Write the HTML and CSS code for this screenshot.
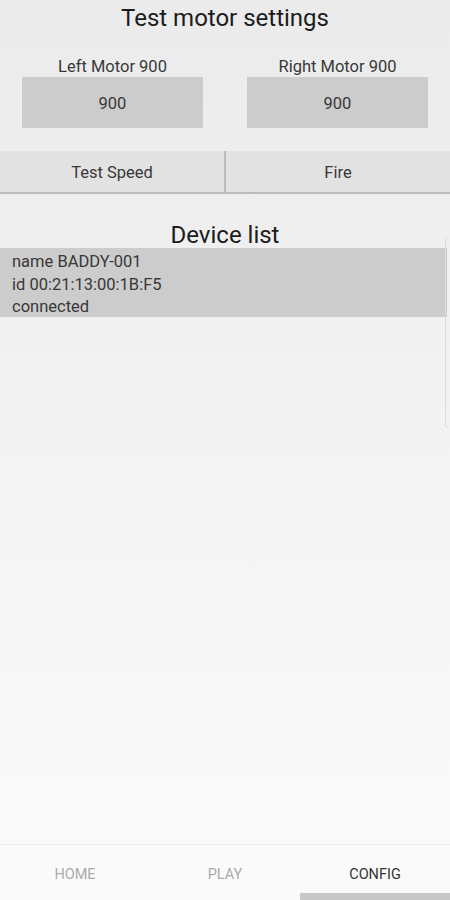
FILE: index.html
```html
<!DOCTYPE html>
<html>
  <head>
    <title>Config</title>
    <link rel="stylesheet" href="styles.css">
  </head>
  <body>
    <div class="screen">
      <main class="content">
        <h2 class="section-title">Test motor settings</h2>

        <div class="motors">
          <div class="motor">
            <div class="motor-label">Left Motor 900</div>
            <div class="motor-input">900</div>
          </div>
          <div class="motor">
            <div class="motor-label">Right Motor 900</div>
            <div class="motor-input">900</div>
          </div>
        </div>

        <div class="actions">
          <button class="action-button">Test Speed</button>
          <button class="action-button">Fire</button>
        </div>

        <h2 class="section-title device-title">Device list</h2>
        <div class="device">
          <div>name BADDY-001</div>
          <div>id 00:21:13:00:1B:F5</div>
          <div>connected</div>
        </div>
      </main>

      <nav class="tabs">
        <div class="tab">HOME</div>
        <div class="tab">PLAY</div>
        <div class="tab active">CONFIG</div>
      </nav>

      <div class="edge-handle"></div>
    </div>
  </body>
</html>
```

FILE: styles.css
```css
body {
  margin: 0;
  font-family: Roboto, "Noto Sans", sans-serif;
  color: #222;
}

.screen {
  position: relative;
  width: 450px;
  height: 900px;
  display: flex;
  flex-direction: column;
  background: linear-gradient(#ebebeb, #fafafa 830px);
  overflow: hidden;
}

.content {
  flex: 1;
}

.section-title {
  margin: 0;
  padding-top: 4px;
  font-size: 24px;
  font-weight: 400;
  text-align: center;
  line-height: 28px;
  color: #1c1c1c;
}

.motors {
  display: flex;
  gap: 44px;
  padding: 25px 22px 0;
}

.motor {
  flex: 1;
}

.motor-label {
  text-align: center;
  font-size: 16.5px;
  line-height: 20px;
  color: #383838;
}

.motor-input {
  background-color: #cccccc;
  height: 51px;
  padding-top: 2px;
  box-sizing: border-box;
  line-height: 49px;
  text-align: center;
  font-size: 16.5px;
  color: #383838;
}

.actions {
  display: flex;
  margin-top: 23px;
}

.action-button {
  flex: 1;
  height: 43px;
  padding: 2px 0 0;
  border: none;
  border-bottom: 2px solid #bcbcbc;
  background-color: #e2e2e2;
  font-family: inherit;
  font-size: 16.5px;
  color: #383838;
}

.action-button + .action-button {
  border-left: 2px solid #bcbcbc;
}

.device-title {
  padding-top: 28px;
  line-height: 26px;
}

.device {
  margin-right: 3px;
  background-color: #cccccc;
  height: 69px;
  padding: 3px 12px 0;
  box-sizing: border-box;
  font-size: 16.5px;
  line-height: 22.5px;
  color: #383838;
}

.tabs {
  display: flex;
  height: 55px;
  border-top: 1px solid #ececec;
  background-color: #fafafa;
}

.tab {
  flex: 1;
  text-align: center;
  padding-top: 21px;
  font-size: 14.5px;
  color: #aaa;
  box-sizing: border-box;
}

.tab.active {
  color: #333;
  border-bottom: 7px solid #c8c8c8;
}

.edge-handle {
  position: absolute;
  top: 236px;
  right: 1px;
  width: 3px;
  height: 190px;
  border: 1px solid #dcdcdc;
  border-right: none;
  border-radius: 4px 0 0 4px;
}
```
